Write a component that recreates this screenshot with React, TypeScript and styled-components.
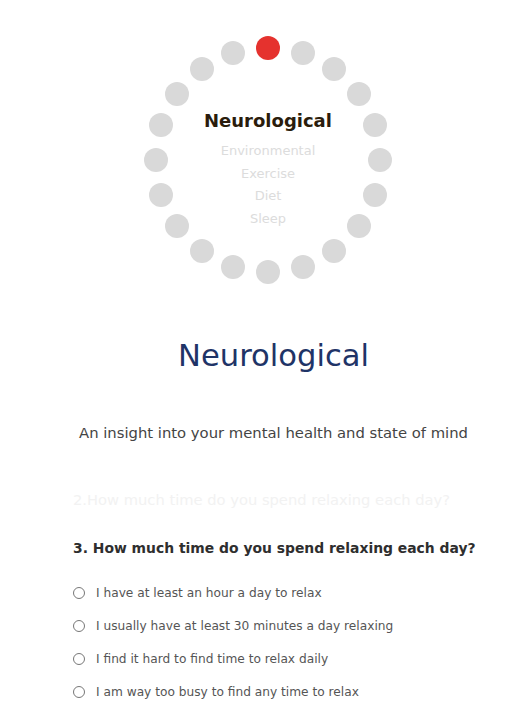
import React from "react";
import styled, { createGlobalStyle } from "styled-components";

const Global = createGlobalStyle`
  html, body { margin: 0; padding: 0; background: #ffffff; }
  body { font-family: "DejaVu Sans", "Open Sans", sans-serif; }
`;

const Page = styled.main`
  width: 529px;
  padding-top: 36px;
  display: flex;
  flex-direction: column;
`;

const WheelRow = styled.div`
  display: flex;
  justify-content: center;
  padding-left: 7px;
`;

const Wheel = styled.div`
  position: relative;
  width: 248px;
  height: 248px;
  display: flex;
  flex-direction: column;
  align-items: center;
  padding-top: 73px;
  box-sizing: border-box;
`;

const Dot = styled.span<{ $active?: boolean }>`
  position: absolute;
  width: 24px;
  height: 24px;
  border-radius: 50%;
  background: ${(p) => (p.$active ? "#e5322e" : "#d9d9d9")};
`;

const ActiveLabel = styled.div`
  font-size: 18px;
  line-height: 24px;
  font-weight: 700;
  color: #2a1c0c;
  margin-bottom: 7px;
  position: relative;
`;

const Label = styled.div`
  font-size: 13px;
  line-height: 22.7px;
  color: #dcdcdc;
  position: relative;
`;

const Content = styled.section`
  padding-left: 18px;
  display: flex;
  flex-direction: column;
  align-items: center;
`;

const Title = styled.h1`
  margin: 52px 0 0;
  font-size: 30.6px;
  line-height: 40px;
  font-weight: 400;
  color: #1f3467;
`;

const Subtitle = styled.p`
  margin: 47px 0 0;
  font-size: 14.8px;
  line-height: 20px;
  color: #444444;
`;

const QuestionBlock = styled.div`
  align-self: stretch;
  padding-left: 55px;
  display: flex;
  flex-direction: column;
`;

const FadedQuestion = styled.p`
  margin: 47px 0 0;
  font-size: 14.7px;
  line-height: 20px;
  color: #f2f2f2;
`;

const Question = styled.h2`
  margin: 28px 0 0;
  font-size: 13.9px;
  line-height: 20px;
  font-weight: 700;
  color: #2e2e2e;
`;

const Options = styled.div`
  margin-top: 18px;
  display: flex;
  flex-direction: column;
`;

const Option = styled.label`
  display: flex;
  align-items: center;
  gap: 11px;
  height: 33px;
  font-size: 12.2px;
  color: #555555;
`;

const Radio = styled.span`
  width: 10px;
  height: 10px;
  border: 1.5px solid #777777;
  border-radius: 50%;
  flex: none;
`;

const labels = ["Environmental", "Exercise", "Diet", "Sleep"];
const options = [
  "I have at least an hour a day to relax",
  "I usually have at least 30 minutes a day relaxing",
  "I find it hard to find time to relax daily",
  "I am way too busy to find any time to relax",
];

export default function App() {
  const dots = Array.from({ length: 20 }, (_, i) => {
    const a = (i * 18 * Math.PI) / 180;
    const x = 124 + 112 * Math.sin(a) - 12;
    const y = 124 - 112 * Math.cos(a) - 12;
    return { x, y, active: i === 0 };
  });
  return (
    <>
      <Global />
      <Page>
        <WheelRow>
          <Wheel>
            {dots.map((d, i) => (
              <Dot key={i} $active={d.active} style={{ left: d.x, top: d.y }} />
            ))}
            <ActiveLabel>Neurological</ActiveLabel>
            {labels.map((l) => (
              <Label key={l}>{l}</Label>
            ))}
          </Wheel>
        </WheelRow>
        <Content>
          <Title>Neurological</Title>
          <Subtitle>An insight into your mental health and state of mind</Subtitle>
          <QuestionBlock>
            <FadedQuestion>2.How much time do you spend relaxing each day?</FadedQuestion>
            <Question>3. How much time do you spend relaxing each day?</Question>
            <Options>
              {options.map((o) => (
                <Option key={o}>
                  <Radio />
                  {o}
                </Option>
              ))}
            </Options>
          </QuestionBlock>
        </Content>
      </Page>
    </>
  );
}
